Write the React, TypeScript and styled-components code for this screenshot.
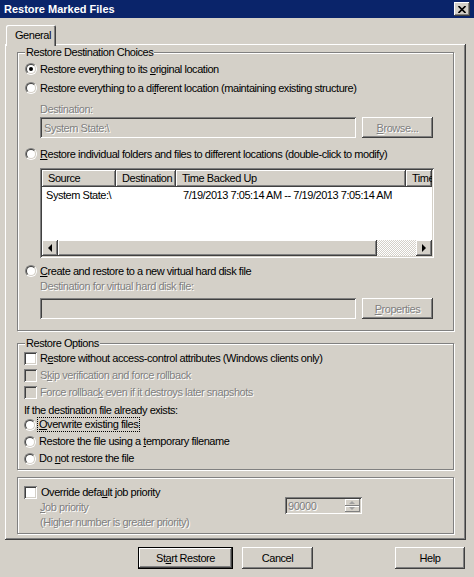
import React from "react";
import styled, { createGlobalStyle, css } from "styled-components";

const GlobalStyle = createGlobalStyle`
	html, body {
		margin: 0;
		padding: 0;
		background: #d4d0c8;
	}
	body {
		font-family: "Liberation Sans", Arial, sans-serif;
		font-size: 11px;
	}
`;

const raised = css`
	box-shadow: inset -1px -1px #404040, inset 1px 1px #ffffff,
		inset -2px -2px #808080, inset 2px 2px #d4d0c8;
`;
const sunken = css`
	box-shadow: inset 1px 1px #808080, inset -1px -1px #ffffff,
		inset 2px 2px #404040, inset -2px -2px #d4d0c8;
`;
const disabledText = css`
	color: #808080;
	text-shadow: 1px 1px 0 #ffffff;
`;

const Window = styled.div`
	width: 474px;
	height: 577px;
	overflow: hidden;
	background: #d4d0c8;
	color: #000;
	display: flex;
	flex-direction: column;
`;
const TitleBar = styled.div`
	height: 18px;
	flex-shrink: 0;
	background: #0a246a;
	color: #fff;
	font-weight: bold;
	display: flex;
	align-items: center;
	justify-content: space-between;
	padding: 0 4px 0 4px;
`;
const CloseButton = styled.div`
	width: 16px;
	height: 14px;
	background: #d4d0c8;
	${raised};
	display: flex;
	align-items: center;
	justify-content: center;
`;
const Content = styled.div`
	letter-spacing: -0.45px;
	display: flex;
	flex-direction: column;
`;
const TabStrip = styled.div`
	margin-top: 7px;
	padding-left: 6px;
	display: flex;
	height: 19px;
	position: relative;
	z-index: 1;
`;
const Tab = styled.div`
	width: 50px;
	height: 21px;
	padding-bottom: 2px;
	margin-bottom: -2px;
	background: #d4d0c8;
	border-radius: 2px 2px 0 0;
	box-shadow: inset 1px 1px #ffffff, inset -1px 0 #404040, inset -2px 0 #808080;
	display: flex;
	align-items: center;
	padding-left: 9px;
	box-sizing: border-box;
`;
const Panel = styled.div`
	margin-left: 5px;
	width: 461px;
	box-sizing: border-box;
	${raised};
	padding: 8px 12px 6px 12px;
	display: flex;
	flex-direction: column;
`;
const Group = styled.div<{ $mt?: number; $pt: number; $pb: number; $pl: number }>`
	position: relative;
	margin-top: ${(p) => p.$mt ?? 0}px;
	border: 1px solid #808080;
	box-shadow: inset 1px 1px #ffffff, 1px 1px #ffffff;
	padding: ${(p) => p.$pt}px 0 ${(p) => p.$pb}px ${(p) => p.$pl}px;
	display: flex;
	flex-direction: column;
`;
const GroupLabel = styled.span`
	position: absolute;
	top: -7px;
	left: 7px;
	padding: 0 1px;
	line-height: 13px;
	background: #d4d0c8;
`;
const OptionRow = styled.div<{ $mt?: number; $h?: number }>`
	display: flex;
	align-items: center;
	height: ${(p) => p.$h ?? 16}px;
	margin-top: ${(p) => p.$mt ?? 0}px;
	white-space: nowrap;
`;
const OptionText = styled.span<{ $disabled?: boolean; $gap?: number }>`
	margin-left: ${(p) => p.$gap ?? 3}px;
	line-height: 13px;
	${(p) => p.$disabled && disabledText};
`;
const FocusText = styled(OptionText)`
	outline: 1px dotted #000;
	outline-offset: 0;
	padding: 0 1px;
	margin-left: 2px;
`;
const U = styled.span`
	text-decoration: underline;
`;
const RadioOuter = styled.span`
	width: 12px;
	height: 12px;
	box-sizing: border-box;
	border-radius: 50%;
	border: 1px solid;
	border-color: #808080 #ffffff #ffffff #808080;
	display: flex;
	flex-shrink: 0;
`;
const RadioInner = styled.span<{ $checked?: boolean }>`
	flex: 1;
	border-radius: 50%;
	border: 1px solid;
	border-color: #404040 #d4d0c8 #d4d0c8 #404040;
	background: #fff;
	display: flex;
	align-items: center;
	justify-content: center;
	&::after {
		content: "";
		width: 4px;
		height: 4px;
		border-radius: 50%;
		background: ${(p) => (p.$checked ? "#000" : "transparent")};
	}
`;
const CheckBox = styled.span<{ $disabled?: boolean }>`
	width: 13px;
	height: 13px;
	flex-shrink: 0;
	background: ${(p) => (p.$disabled ? "#d4d0c8" : "#fff")};
	${sunken};
`;
const FieldLabel = styled.div<{ $mt?: number }>`
	margin: ${(p) => p.$mt ?? 0}px 0 0 15px;
	line-height: 13px;
	${disabledText};
`;
const FieldRow = styled.div<{ $mt?: number }>`
	display: flex;
	gap: 6px;
	margin: ${(p) => p.$mt ?? 0}px 0 0 15px;
`;
const TextBox = styled.div`
	width: 316px;
	height: 21px;
	box-sizing: border-box;
	background: #d4d0c8;
	${sunken};
	padding: 0 4px;
	display: flex;
	align-items: center;
	${disabledText};
`;
const Button = styled.div<{ $w: number; $h?: number; $default?: boolean; $disabled?: boolean }>`
	width: ${(p) => p.$w}px;
	height: ${(p) => p.$h ?? 22}px;
	box-sizing: border-box;
	background: #d4d0c8;
	display: flex;
	align-items: center;
	justify-content: center;
	flex-shrink: 0;
	${(p) =>
		p.$default
			? css`
					border: 1px solid #000;
					${raised};
			  `
			: raised};
	${(p) => p.$disabled && disabledText};
`;
const ListView = styled.div`
	margin: 6px 0 0 15px;
	width: 394px;
	height: 90px;
	box-sizing: border-box;
	padding: 2px;
	background: #fff;
	${sunken};
	display: flex;
	flex-direction: column;
	overflow: hidden;
`;
const HeaderRow = styled.div`
	display: flex;
	height: 17px;
	flex-shrink: 0;
`;
const HeaderCell = styled.div<{ $w: number }>`
	width: ${(p) => p.$w}px;
	flex-shrink: 0;
	box-sizing: border-box;
	background: #d4d0c8;
	box-shadow: inset -1px -1px #404040, inset 1px 1px #ffffff, inset -2px -2px #808080;
	padding-left: 6px;
	line-height: 17px;
	white-space: nowrap;
	overflow: hidden;
`;
const ListBody = styled.div`
	flex: 1;
`;
const ListRow = styled.div`
	display: flex;
	height: 16px;
	align-items: center;
	white-space: nowrap;
`;
const ListCell = styled.div<{ $w: number; $pl: number }>`
	width: ${(p) => p.$w}px;
	flex-shrink: 0;
	box-sizing: border-box;
	padding-left: ${(p) => p.$pl}px;
`;
const HScroll = styled.div`
	height: 16px;
	display: flex;
	flex-shrink: 0;
`;
const ScrollButton = styled.div`
	width: 16px;
	height: 16px;
	background: #d4d0c8;
	${raised};
	display: flex;
	align-items: center;
	justify-content: center;
`;
const ScrollThumb = styled.div<{ $w: number }>`
	width: ${(p) => p.$w}px;
	background: #d4d0c8;
	${raised};
`;
const ScrollTrack = styled.div`
	flex: 1;
	background-color: #d4d0c8;
	background-image: conic-gradient(#ffffff 25%, #d4d0c8 0 50%, #ffffff 0 75%, #d4d0c8 0);
	background-size: 2px 2px;
`;
const PlainLine = styled.div<{ $mt?: number; $h: number; $ml: number; $disabled?: boolean }>`
	margin: ${(p) => p.$mt ?? 0}px 0 0 ${(p) => p.$ml}px;
	height: ${(p) => p.$h}px;
	display: flex;
	align-items: center;
	white-space: nowrap;
	${(p) => p.$disabled && disabledText};
`;
const JobRow = styled.div`
	display: flex;
	height: 14px;
	margin-left: 16px;
	align-items: center;
`;
const JobLabel = styled.span`
	width: 245px;
	${disabledText};
`;
const SpinBox = styled.div`
	align-self: flex-start;
	margin-top: -3px;
	width: 77px;
	height: 17px;
	box-sizing: border-box;
	background: #d4d0c8;
	${sunken};
	display: flex;
	align-items: center;
	padding: 2px 2px 2px 3px;
	${disabledText};
`;
const SpinValue = styled.span`
	flex: 1;
`;
const SpinButtons = styled.div`
	width: 15px;
	height: 13px;
	display: flex;
	flex-direction: column;
`;
const SpinButton = styled.div`
	flex: 1;
	background: #d4d0c8;
	box-shadow: inset -1px -1px #808080, inset 1px 1px #ffffff;
	display: flex;
	align-items: center;
	justify-content: center;
`;
const Footer = styled.div`
	margin-top: 7px;
	padding: 0 9px 0 138px;
	display: flex;
	gap: 9px;
`;
const HelpSlot = styled.div`
	margin-left: auto;
`;

const Radio = ({ checked }: { checked?: boolean }) => (
	<RadioOuter>
		<RadioInner $checked={checked} />
	</RadioOuter>
);

const Arrow = ({ dir, color = "#000" }: { dir: "left" | "right" | "up" | "down"; color?: string }) => {
	const pts = {
		left: "5,0 5,8 1,4",
		right: "1,0 1,8 5,4",
		up: "0,4 6,4 3,1",
		down: "0,1 6,1 3,4",
	}[dir];
	const horiz = dir === "left" || dir === "right";
	return (
		<svg width={horiz ? 6 : 7} height={horiz ? 8 : 5} viewBox={horiz ? "0 0 6 8" : "0 0 7 5"}>
			<polygon points={pts} fill={color} />
		</svg>
	);
};

const App = () => {
	return (
		<Window>
			<GlobalStyle />
			<TitleBar>
				<span>Restore Marked Files</span>
				<CloseButton>
					<svg width="8" height="7" viewBox="0 0 8 7">
						<path d="M0.5 0 L7.5 7 M7.5 0 L0.5 7" stroke="#000" strokeWidth="1.6" />
					</svg>
				</CloseButton>
			</TitleBar>
			<Content>
				<TabStrip>
					<Tab>General</Tab>
				</TabStrip>
				<Panel>
					<Group $pt={8} $pb={11} $pl={7}>
						<GroupLabel>Restore Destination Choices</GroupLabel>
						<OptionRow>
							<Radio checked />
							<OptionText>
								Restore everything to its <U>o</U>riginal location
							</OptionText>
						</OptionRow>
						<OptionRow $mt={3}>
							<Radio />
							<OptionText>
								Restore everything to a di<U>f</U>ferent location (maintaining existing structure)
							</OptionText>
						</OptionRow>
						<FieldLabel $mt={7}>Destination:</FieldLabel>
						<FieldRow $mt={1}>
							<TextBox>System State:\</TextBox>
							<Button $w={71} $h={21} $disabled>
								<U>B</U>rowse...
							</Button>
						</FieldRow>
						<OptionRow $mt={8}>
							<Radio />
							<OptionText>
								<U>R</U>estore individual folders and files to different locations (double-click to modify)
							</OptionText>
						</OptionRow>
						<ListView>
							<HeaderRow>
								<HeaderCell $w={74}>Source</HeaderCell>
								<HeaderCell $w={60}>Destination</HeaderCell>
								<HeaderCell $w={230}>Time Backed Up</HeaderCell>
								<HeaderCell $w={26}>Time</HeaderCell>
							</HeaderRow>
							<ListBody>
								<ListRow>
									<ListCell $w={134} $pl={4}>System State:\</ListCell>
									<ListCell $w={230} $pl={7}>7/19/2013 7:05:14 AM -- 7/19/2013 7:05:14 AM</ListCell>
								</ListRow>
							</ListBody>
							<HScroll>
								<ScrollButton>
									<Arrow dir="left" />
								</ScrollButton>
								<ScrollThumb $w={319} />
								<ScrollTrack />
								<ScrollButton>
									<Arrow dir="right" />
								</ScrollButton>
							</HScroll>
						</ListView>
						<OptionRow $mt={5}>
							<Radio />
							<OptionText>
								<U>C</U>reate and restore to a new virtual hard disk file
							</OptionText>
						</OptionRow>
						<FieldLabel $mt={1}>Destination for virtual hard disk file:</FieldLabel>
						<FieldRow $mt={5}>
							<TextBox />
							<Button $w={71} $h={21} $disabled>
								<U>P</U>roperties
							</Button>
						</FieldRow>
					</Group>

					<Group $mt={12} $pt={6} $pb={2} $pl={6}>
						<GroupLabel>Restore Options</GroupLabel>
						<OptionRow $h={17}>
							<CheckBox />
							<OptionText>
								R<U>e</U>store without access-control attributes (Windows clients only)
							</OptionText>
						</OptionRow>
						<OptionRow $h={17}>
							<CheckBox $disabled />
							<OptionText $disabled>
								S<U>k</U>ip verification and force rollback
							</OptionText>
						</OptionRow>
						<OptionRow $h={17}>
							<CheckBox $disabled />
							<OptionText $disabled>
								Force rollbac<U>k</U> even if it destroys later snapshots
							</OptionText>
						</OptionRow>
						<PlainLine $mt={3} $h={12} $ml={0}>
							If the destination file already exists:
						</PlainLine>
						<OptionRow $h={17}>
							<Radio />
							<FocusText>
								<U>O</U>verwrite existing files
							</FocusText>
						</OptionRow>
						<OptionRow $h={17}>
							<Radio />
							<OptionText>
								Restore the file using a <U>t</U>emporary filename
							</OptionText>
						</OptionRow>
						<OptionRow $h={17}>
							<Radio />
							<OptionText>
								Do <U>n</U>ot restore the file
							</OptionText>
						</OptionRow>
					</Group>

					<Group $mt={7} $pt={6} $pb={4} $pl={6}>
						<OptionRow>
							<CheckBox />
							<OptionText $gap={4}>
								Override defa<U>u</U>lt job priority
							</OptionText>
						</OptionRow>
						<JobRow>
							<JobLabel>
								<U>J</U>ob priority
							</JobLabel>
							<SpinBox>
								<SpinValue>90000</SpinValue>
								<SpinButtons>
									<SpinButton>
										<Arrow dir="up" color="#a0a0a0" />
									</SpinButton>
									<SpinButton>
										<Arrow dir="down" color="#a0a0a0" />
									</SpinButton>
								</SpinButtons>
							</SpinBox>
						</JobRow>
						<PlainLine $h={14} $ml={16} $mt={1} $disabled>
							(Higher number is greater priority)
						</PlainLine>
					</Group>
				</Panel>
				<Footer>
					<Button $w={95} $default>
						St<U>a</U>rt Restore
					</Button>
					<Button $w={71}>Cancel</Button>
					<HelpSlot>
						<Button $w={70}>Help</Button>
					</HelpSlot>
				</Footer>
			</Content>
		</Window>
	);
};

export default App;
